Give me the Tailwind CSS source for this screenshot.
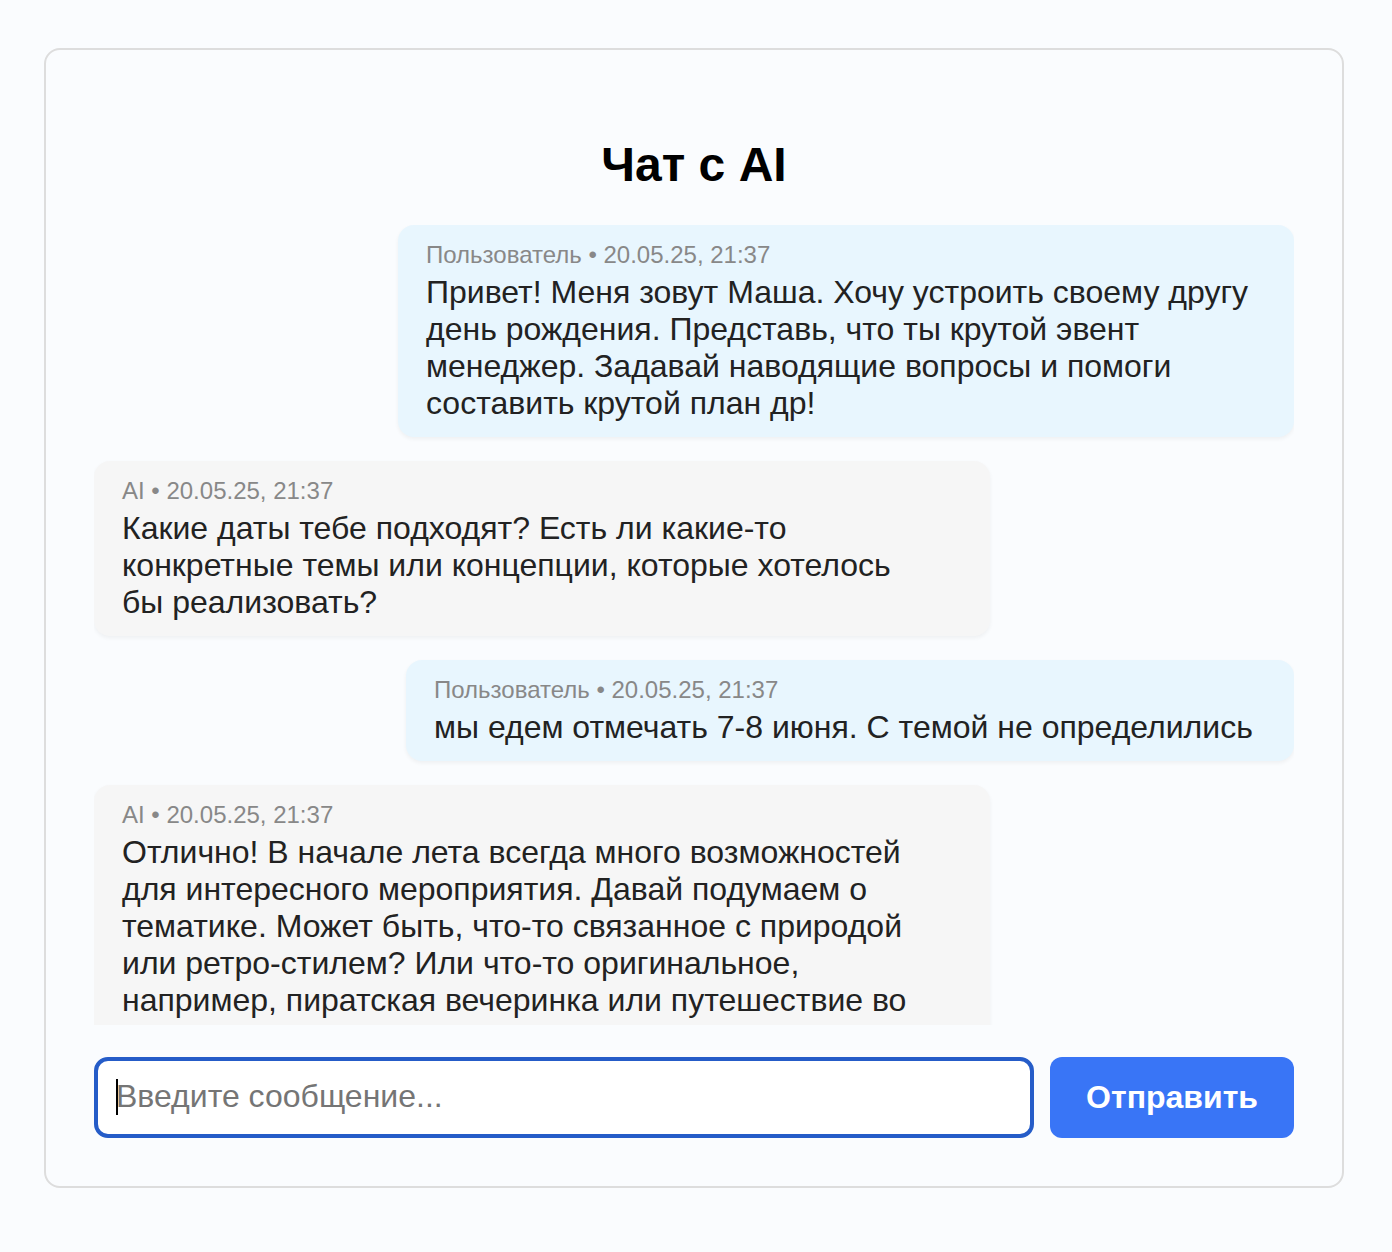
<!DOCTYPE html>
<html lang="ru">
<head>
<meta charset="utf-8">
<meta name="viewport" content="width=device-width, initial-scale=1">
<title>Чат с AI</title>
<script src="https://cdn.jsdelivr.net/npm/@tailwindcss/browser@4"></script>
</head>
<body class="bg-[#fafcfe] py-12 pr-12 pl-11 font-['Liberation_Sans',Arial,sans-serif] text-[#222]">
<main class="rounded-2xl border-2 border-[#dddddd] px-12 pt-[87px] pb-12">
  <h1 class="mb-8 text-center text-5xl leading-14 font-bold text-black">Чат с AI</h1>
  <section aria-label="Сообщения" class="flex h-[800px] flex-col gap-6 overflow-x-hidden overflow-y-auto [scrollbar-width:none] text-[32px] leading-[37px]">
    <article class="max-w-[896px] shrink-0 self-end rounded-2xl bg-[#e8f6fe] px-7 pt-4 pb-[15px] shadow-[0_2px_4px_rgba(0,0,0,0.05)]">
      <p class="mb-[5px] text-2xl leading-7 text-[#888]">Пользователь • 20.05.25, 21:37</p>
      <p>Привет! Меня зовут Маша. Хочу устроить своему другу день рождения. Представь, что ты крутой эвент менеджер. Задавай наводящие вопросы и помоги составить крутой план др!</p>
    </article>
    <article class="max-w-[896px] shrink-0 self-start rounded-2xl bg-[#f6f6f6] px-7 pt-4 pb-[15px] shadow-[0_2px_4px_rgba(0,0,0,0.05)]">
      <p class="mb-[5px] text-2xl leading-7 text-[#888]">AI • 20.05.25, 21:37</p>
      <p>Какие даты тебе подходят? Есть ли какие-то конкретные темы или концепции, которые хотелось бы&nbsp;реализовать?</p>
    </article>
    <article class="w-[74%] shrink-0 self-end rounded-2xl bg-[#e8f6fe] px-7 pt-4 pb-[15px] shadow-[0_2px_4px_rgba(0,0,0,0.05)]">
      <p class="mb-[5px] text-2xl leading-7 text-[#888]">Пользователь • 20.05.25, 21:37</p>
      <p>мы едем отмечать 7-8 июня. С темой не определились</p>
    </article>
    <article class="max-w-[896px] shrink-0 self-start rounded-2xl bg-[#f6f6f6] px-7 pt-4 pb-[15px] shadow-[0_2px_4px_rgba(0,0,0,0.05)]">
      <p class="mb-[5px] text-2xl leading-7 text-[#888]">AI • 20.05.25, 21:37</p>
      <p>Отлично! В начале лета всегда много возможностей для интересного мероприятия. Давай подумаем о тематике. Может быть, что-то связанное с природой или ретро-стилем? Или что-то оригинальное, например, пиратская вечеринка или путешествие во времени?</p>
    </article>
  </section>
  <form class="mt-8 flex gap-4">
    <div class="relative min-w-0 flex-1">
      <input type="text" aria-label="Сообщение" placeholder="Введите сообщение..." class="block h-[81px] w-full rounded-[14px] border-4 border-[#255cc8] bg-white px-[18px] pb-0.5 text-[32px] outline-none placeholder:text-[#757575]">
      <span aria-hidden="true" class="absolute top-[22px] left-[22px] h-9 w-0.5 bg-black"></span>
    </div>
    <button type="submit" class="h-[81px] rounded-xl bg-[#3975f6] px-9 pb-0.5 text-[32px] font-bold text-white">Отправить</button>
  </form>
</main>
</body>
</html>
